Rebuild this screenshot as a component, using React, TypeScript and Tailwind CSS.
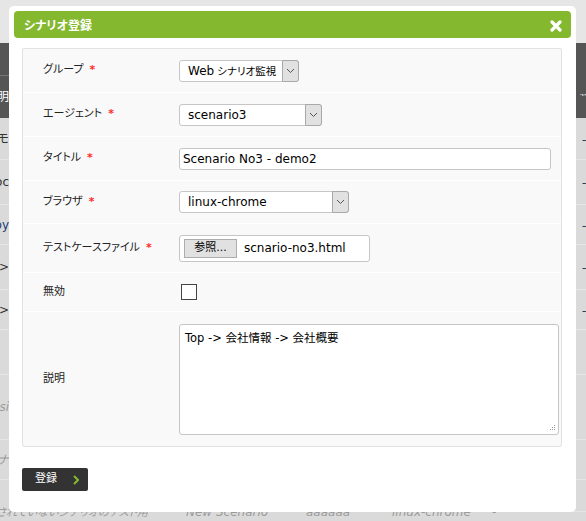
import React from "react";

const Req = () => <span className="text-[#ff2a2a] ml-[6px] font-bold">*</span>;

const Chevron = () => (
  <svg width="9" height="6" viewBox="0 0 9 6" className="block">
    <path d="M1 1 L4.5 4.5 L8 1" fill="none" stroke="#555" strokeWidth="1" />
  </svg>
);

const Select = ({ w, children }: { w: string; children: React.ReactNode }) => (
  <div className={`${w} h-[22px] bg-white border border-[#c6c6c6] rounded-[3px] flex items-stretch`}>
    <div className="flex-1 flex items-center pl-[8px] text-[12px] text-black whitespace-nowrap overflow-hidden">{children}</div>
    <div className="w-[17px] my-[-1px] mr-[-1px] bg-[#e1e1e1] border border-[#a9a9a9] rounded-r-[3px] flex items-center justify-center">
      <Chevron />
    </div>
  </div>
);

const Row = ({ h, label, req, children, last }: { h: string; label: string; req?: boolean; children: React.ReactNode; last?: boolean }) => (
  <div className={`${h} flex items-center ${last ? "" : "border-b border-white"}`}>
    <div className="w-[156px] shrink-0 pl-[20px] text-[11px] text-[#222] whitespace-nowrap [font-feature-settings:'palt']">
      {label}
      {req && <Req />}
    </div>
    <div className="flex-1">{children}</div>
  </div>
);

const bgRows: { h: string; l: string; lc?: string; r: string }[] = [
  { h: "h-[42px]", l: "キャンセルモ", r: "-" },
  { h: "h-[45px]", l: "ooc", r: "-" },
  { h: "h-[40px]", l: "copy", lc: "text-[#1d3a6e]", r: "-" },
  { h: "h-[45px]", l: "->", r: "-" },
  { h: "h-[40px]", l: "->", r: "-" },
  { h: "h-[45px]", l: "", r: "" },
  { h: "h-[65px]", l: "Desi", lc: "italic text-[#9a9a9a]", r: "" },
  { h: "h-[40px]", l: "シナ", lc: "italic text-[#9a9a9a]", r: "" },
  { h: "h-[32px]", l: "", r: "" },
];

export default function App() {
  return (
    <div className="relative w-[586px] h-[521px] overflow-hidden bg-[#dadada] font-['DejaVu_Sans','Noto_Sans_CJK_JP',sans-serif]">
      {/* background page */}
      <div className="flex flex-col">
        <div className="h-[43px] bg-[#e6e6e6]" />
        <div className="h-[75px] bg-[#555555] flex flex-col">
          <div className="h-[33px] border-b border-[#777] w-[9px]" />
          <div className="flex-1 flex justify-between items-center">
            <div className="w-[9px] overflow-hidden flex justify-end">
              <span className="text-white text-[12px] whitespace-nowrap">説明</span>
            </div>
            <div className="w-[10px] overflow-hidden flex">
              <span className="text-white text-[12px] whitespace-nowrap pl-[4px] -mt-[12px]">総</span>
            </div>
          </div>
        </div>
        {bgRows.map((r, i) => (
          <div key={i} className={`${r.h} border-b border-[#e6e6e6] flex justify-between items-center`}>
            <div className="w-[9px] overflow-hidden flex justify-end">
              <span className={`text-[12px] whitespace-nowrap ${r.lc ?? "text-[#333]"}`}>{r.l}</span>
            </div>
            <div className="w-[10px] overflow-hidden">
              <span className="text-[12px] text-[#333] pl-[6px]">{r.r}</span>
            </div>
          </div>
        ))}
        <div className="h-[40px] flex items-start text-[12px] italic text-[#9a9a9a] whitespace-nowrap -mt-[9px]">
          <div className="w-[148px] shrink-0 overflow-hidden flex justify-end">
            <span className="[font-feature-settings:'palt'] font-['Noto_Sans_CJK_JP',sans-serif] text-[11px]">実行されていないシナリオのテスト用</span>
          </div>
          <span className="ml-[38px] w-[120px] shrink-0">New Scenario</span>
          <span className="w-[86px] shrink-0">aaaaaa</span>
          <span className="w-[100px] shrink-0">linux-chrome</span>
          <span>-</span>
        </div>
      </div>

      {/* modal */}
      <div className="absolute left-[9px] top-[6px] w-[567px] h-[506px] bg-white rounded-[5px] p-[5px] flex flex-col">
        <div className="h-[27px] bg-[#84b82f] rounded-[4px] flex items-center justify-between pl-[10px] pr-[9px]">
          <span className="text-white text-[12px] font-bold [font-feature-settings:'palt'] font-['Noto_Sans_CJK_JP',sans-serif]">シナリオ登録</span>
          <svg width="12" height="12" viewBox="0 0 12 12" className="mt-[3px]">
            <path d="M2 2 L10 10 M10 2 L2 10" stroke="white" strokeWidth="3.2" strokeLinecap="round" />
          </svg>
        </div>

        <div className="mt-[10px] ml-[8px] mr-[9px] h-[399px] bg-[#f9f9f9] border border-[#e2e2e2] rounded-[2px] flex flex-col">
          <Row h="h-[44px]" label="グループ" req>
            <Select w="w-[120px]">
              Web<span className="ml-[3px] text-[10.5px] [font-feature-settings:'palt'] font-['Noto_Sans_CJK_JP',sans-serif]">シナリオ監視</span>
            </Select>
          </Row>
          <Row h="h-[44px]" label="エージェント" req>
            <Select w="w-[143px]">scenario3</Select>
          </Row>
          <Row h="h-[44px]" label="タイトル" req>
            <div className="w-[372px] h-[22px] bg-white border border-[#c6c6c6] rounded-[3px] flex items-center pl-[3px] text-[12px] text-black">
              Scenario No3 - demo2
            </div>
          </Row>
          <Row h="h-[43px]" label="ブラウザ" req>
            <Select w="w-[170px]">linux-chrome</Select>
          </Row>
          <Row h="h-[49px]" label="テストケースファイル" req>
            <div className="w-[191px] h-[27px] bg-white border border-[#c6c6c6] rounded-[3px] flex items-center pl-[4px]">
              <div className="w-[53px] h-[19px] bg-[#e1e1e1] border border-[#adadad] flex items-center justify-center text-[11px] text-black">
                参照...
              </div>
              <span className="ml-[7px] text-[12px] text-black">scnario-no3.html</span>
            </div>
          </Row>
          <Row h="h-[39px]" label="無効">
            <div className="ml-[2px] w-[16px] h-[16px] bg-white border-[1.5px] border-[#444]" />
          </Row>
          <Row h="flex-1" label="説明" last>
            <div className="relative w-[380px] h-[111px] bg-white border border-[#c6c6c6] rounded-[3px] pl-[5px] pt-[5px] text-[11.5px] text-black">
              Top -&gt; 会社情報 -&gt; 会社概要
              <svg width="7" height="7" viewBox="0 0 7 7" className="absolute right-[2px] bottom-[2px]">
                <rect x="5" y="0" width="1" height="1" fill="#999" />
                <rect x="3" y="2" width="1" height="1" fill="#999" />
                <rect x="5" y="2" width="1" height="1" fill="#999" />
                <rect x="1" y="4" width="1" height="1" fill="#999" />
                <rect x="3" y="4" width="1" height="1" fill="#999" />
                <rect x="5" y="4" width="1" height="1" fill="#999" />
              </svg>
            </div>
          </Row>
        </div>

        <div className="mt-[21px] ml-[8px] w-[66px] h-[23px] bg-[#333] rounded-[2px] flex items-center pl-[13px] pr-[9px] justify-between">
          <span className="text-white text-[11px]">登録</span>
          <svg width="6" height="10" viewBox="0 0 6 10">
            <path d="M1 1 L5 5 L1 9" fill="none" stroke="#84b82f" strokeWidth="2" />
          </svg>
        </div>
      </div>
    </div>
  );
}
